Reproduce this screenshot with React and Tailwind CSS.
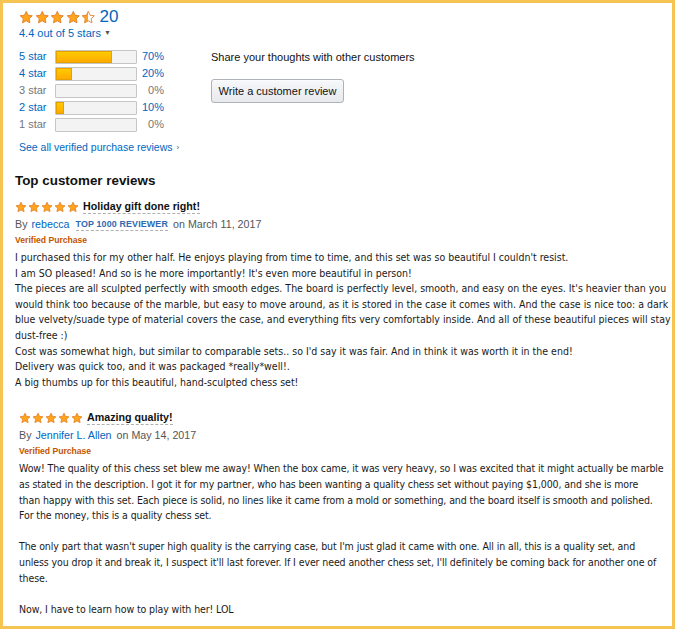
import React from 'react';

const STAR_PATH = 'M12 1.8l3.05 6.4 6.95.85-5.1 4.8 1.3 6.9L12 17.4l-6.2 3.35 1.3-6.9-5.1-4.8 6.95-.85z';

function Star({ size, fill = 1, id }) {
    return (
        <svg width={size} height={size} viewBox="0 0 24 23" className="block">
            <defs>
                <linearGradient id={id} x1="0" x2="1" y1="0" y2="0">
                    <stop offset={fill} stopColor="#ffa41c" />
                    <stop offset={fill} stopColor="#ffffff" />
                </linearGradient>
            </defs>
            <path d={STAR_PATH} fill={`url(#${id})`} stroke="#de7921" strokeWidth="1.4" strokeLinejoin="round" />
        </svg>
    );
}

function Stars({ rating, size, prefix }) {
    return (
        <div className="flex gap-px">
            {[0, 1, 2, 3, 4].map((i) => (
                <Star key={i} size={size} id={`${prefix}-${i}`} fill={Math.max(0, Math.min(1, rating - i))} />
            ))}
        </div>
    );
}

const histogram = [
    { label: '5 star', pct: 70, link: true },
    { label: '4 star', pct: 20, link: true },
    { label: '3 star', pct: 0, link: false },
    { label: '2 star', pct: 10, link: true },
    { label: '1 star', pct: 0, link: false },
];

function Bar({ label, pct, link }) {
    return (
        <div className="flex h-[17px] items-center">
            <span className={`w-[36px] ${link ? 'text-[#0066c0]' : 'text-[#767676]'}`}>{label}</span>
            <div className="h-[14px] w-[82px] overflow-hidden rounded-[1px] border border-[#c6c6c6] bg-[#f3f3f3]">
                <div style={{ width: `${pct}%` }} className="h-full bg-gradient-to-b from-[#ffce00] to-[#ffa700] shadow-[inset_0_0_0_1px_#e6a000]" />
            </div>
            <span className={`w-[27px] text-right ${link ? 'text-[#0066c0]' : 'text-[#767676]'}`}>{pct}%</span>
        </div>
    );
}

function Review({ rating, title, author, badge, date, lines, id, tight }) {
    return (
        <div>
            <div className="flex h-[14px] items-center gap-[4px]">
                <Stars rating={rating} size={12} prefix={id} />
                <span className="border-b border-dashed border-[#b0b0b0] text-[10.7px] leading-[13px] font-bold text-[#111]">{title}</span>
            </div>
            <div className="mt-[2px] flex h-[16px] items-center text-[10.7px] text-[#555]">
                <span>By</span>
                <span className="ml-[4px] text-[#0066c0]">{author}</span>
                {badge && (
                    <span className="ml-[6px] border-b border-dashed border-[#b0b0b0] text-[8.9px] leading-[12px] font-bold tracking-[0.15px] text-[#2f69b0]">{badge}</span>
                )}
                <span className="ml-[5px]">on {date}</span>
            </div>
            <div className="h-[16px] text-[8.6px] leading-[16px] font-bold text-[#c45500]">Verified Purchase</div>
            <div className={`mt-[2px] font-['DejaVu_Sans_Condensed','Liberation_Sans',sans-serif] text-[10.5px] leading-[15.6px] text-[#1a1a1a] ${tight ? 'tracking-[-0.1px]' : ''}`}>
                {lines.map((line, i) => (
                    <div key={i} className="h-[15.6px] whitespace-nowrap">{line || '\u00a0'}</div>
                ))}
            </div>
        </div>
    );
}

export default function App() {
    return (
        <div className="h-[629px] w-[675px] overflow-hidden border-[3px] border-[#f6c453] bg-white font-['Liberation_Sans',Arial,sans-serif] text-[11px] text-[#111]">
            <div className="pl-[16px] pt-[6px]">
                <div className="flex">
                    <div className="w-[176px]">
                        <div className="flex h-[16px] items-center gap-[4px]">
                            <Stars rating={4.5} size={14.5} prefix="avg" />
                            <span className="text-[17px] leading-[16px] text-[#0066c0]">20</span>
                        </div>
                        <div className="flex h-[16px] items-center text-[#0066c0]">
                            4.4 out of 5 stars
                            <span className="ml-[3px] text-[7px] text-[#555]">▼</span>
                        </div>
                        <div className="mt-[7px]">
                            {histogram.map((row) => (
                                <Bar key={row.label} {...row} />
                            ))}
                        </div>
                        <div className="mt-[7px] flex h-[16px] items-center text-[10.5px] text-[#0066c0]">
                            See all verified purchase reviews
                            <span className="ml-[4px] text-[8px] text-[#555]">›</span>
                        </div>
                    </div>
                    <div className="ml-[16px] pt-[40px]">
                        <div className="h-[16px] leading-[16px] text-[#111]">Share your thoughts with other customers</div>
                        <button className="mt-[14px] h-[24px] w-[133px] rounded-[3px] border border-[#adb1b8] bg-gradient-to-b from-[#f7f8fa] to-[#e7e9ec] text-[11px] text-[#111] shadow-[inset_0_1px_0_rgba(255,255,255,0.6)]">
                            Write a customer review
                        </button>
                    </div>
                </div>
            </div>

            <div className="pl-[12px] pt-[14px]">
                <h2 className="h-[22px] text-[13.4px] leading-[22px] font-bold text-[#111]">Top customer reviews</h2>
                <div className="mt-[8px]">
                    <Review
                        id="r1"
                        rating={5}
                        title="Holiday gift done right!"
                        author="rebecca"
                        badge="TOP 1000 REVIEWER"
                        date="March 11, 2017"
                        lines={[
                            "I purchased this for my other half. He enjoys playing from time to time, and this set was so beautiful I couldn't resist.",
                            "I am SO pleased! And so is he more importantly! It's even more beautiful in person!",
                            "The pieces are all sculpted perfectly with smooth edges. The board is perfectly level, smooth, and easy on the eyes. It's heavier than you",
                            'would think too because of the marble, but easy to move around, as it is stored in the case it comes with. And the case is nice too: a dark',
                            'blue velvety/suade type of material covers the case, and everything fits very comfortably inside. And all of these beautiful pieces will stay',
                            'dust-free :)',
                            "Cost was somewhat high, but similar to comparable sets.. so I'd say it was fair. And in think it was worth it in the end!",
                            'Delivery was quick too, and it was packaged *really*well!.',
                            'A big thumbs up for this beautiful, hand-sculpted chess set!',
                        ]}
                    />
                </div>
                <div className="mt-[21px] pl-[4px]">
                    <Review
                        id="r2"
                        rating={5}
                        title="Amazing quality!"
                        author="Jennifer L. Allen"
                        date="May 14, 2017"
                        tight
                        lines={[
                            'Wow! The quality of this chess set blew me away! When the box came, it was very heavy, so I was excited that it might actually be marble',
                            'as stated in the description. I got it for my partner, who has been wanting a quality chess set without paying $1,000, and she is more',
                            'than happy with this set. Each piece is solid, no lines like it came from a mold or something, and the board itself is smooth and polished.',
                            'For the money, this is a quality chess set.',
                            '',
                            "The only part that wasn't super high quality is the carrying case, but I'm just glad it came with one. All in all, this is a quality set, and",
                            "unless you drop it and break it, I suspect it'll last forever. If I ever need another chess set, I'll definitely be coming back for another one of",
                            'these.',
                            '',
                            'Now, I have to learn how to play with her! LOL',
                        ]}
                    />
                </div>
            </div>
        </div>
    );
}
